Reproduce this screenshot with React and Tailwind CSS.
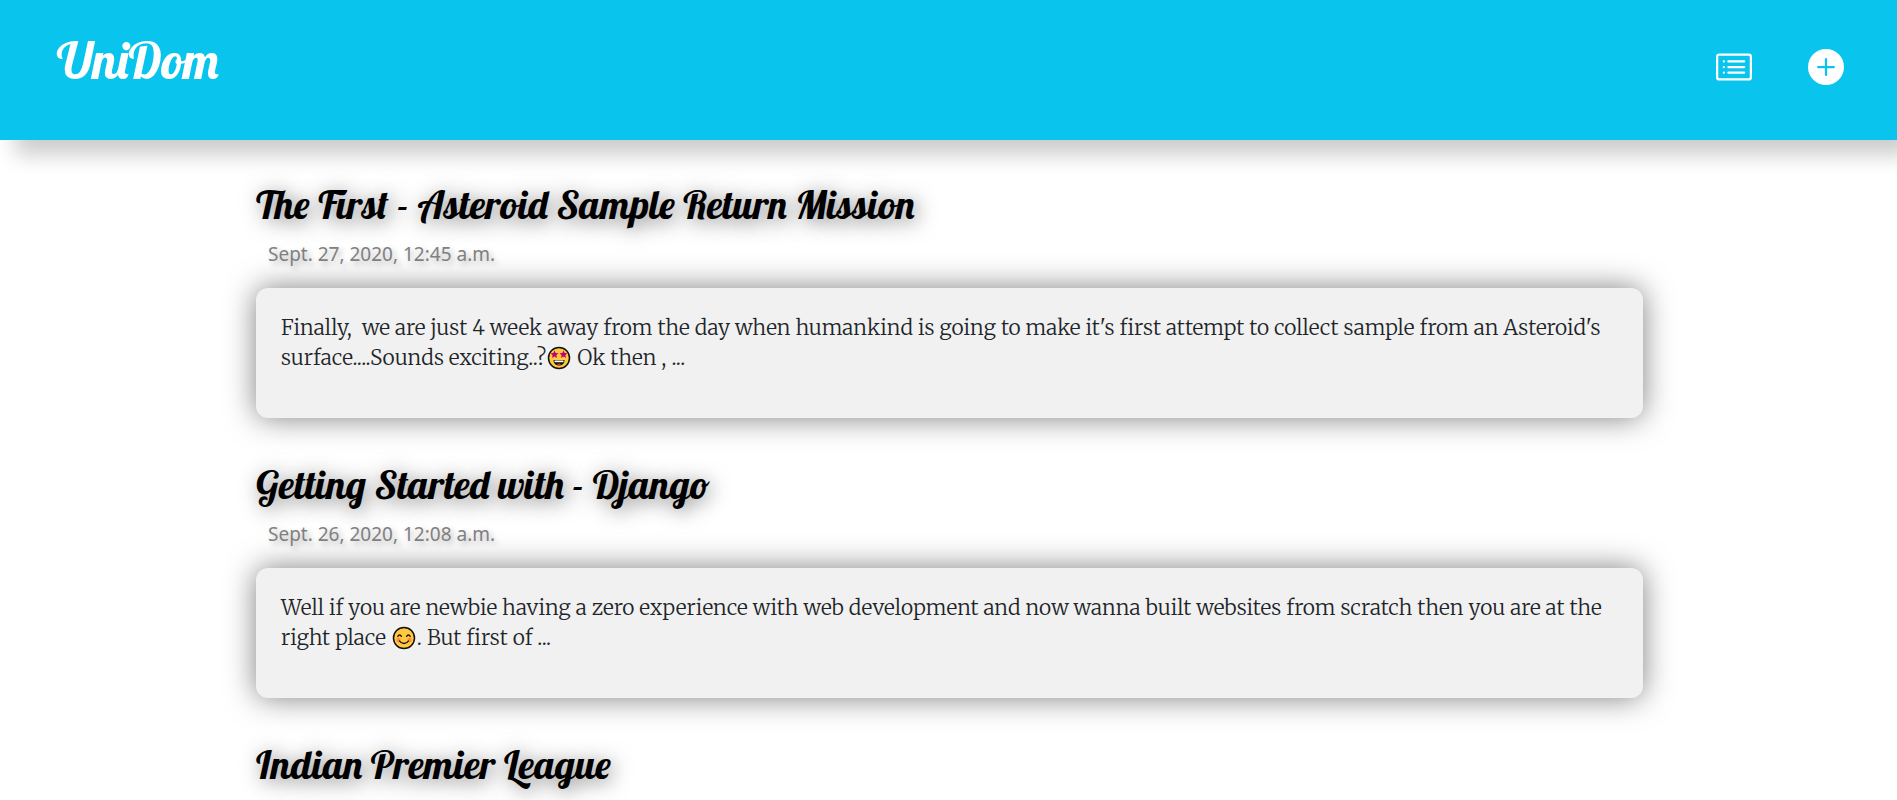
function ListIcon() {
  return (
    <svg viewBox="0 0 16 16" className="size-9" fill="currentColor" aria-hidden="true">
      <path fillRule="evenodd" d="M14.5 3h-13a.5.5 0 0 0-.5.5v9a.5.5 0 0 0 .5.5h13a.5.5 0 0 0 .5-.5v-9a.5.5 0 0 0-.5-.5zm-13-1A1.500 1.500 0 0 0 0 3.500v9A1.500 1.500 0 0 0 1.500 14h13a1.500 1.500 0 0 0 1.500-1.500v-9A1.500 1.500 0 0 0 14.500 2h-13z" />
      <path fillRule="evenodd" d="M5 8a.5.5 0 0 1 .5-.5h7a.5.5 0 0 1 0 1h-7A.5.5 0 0 1 5 8zm0-2.500a.5.5 0 0 1 .5-.5h7a.5.5 0 0 1 0 1h-7a.5.5 0 0 1-.5-.5zm0 5a.5.5 0 0 1 .5-.5h7a.5.5 0 0 1 0 1h-7a.5.5 0 0 1-.5-.5z" />
      <circle cx="3.5" cy="5.500" r=".5" />
      <circle cx="3.5" cy="8" r=".5" />
      <circle cx="3.5" cy="10.500" r=".5" />
    </svg>
  );
}

function PlusIcon() {
  return (
    <svg viewBox="0 0 16 16" className="size-9" aria-hidden="true">
      <circle cx="8" cy="8" r="8" fill="currentColor" />
      <path d="M8 4.500v7M4.500 8h7" stroke="#09c5ed" strokeWidth="1" strokeLinecap="round" />
    </svg>
  );
}

function StarStruck() {
  return (
    <svg viewBox="0 0 24 24" className="mx-px inline-block size-6 align-[-5px]" role="img" aria-label="star-struck">
      <circle cx="12" cy="12" r="10.500" fill="#ffc83d" stroke="#111" strokeWidth="1.500" />
      <path d="M7.500 4.500l1.200 2.500 2.800.3-2.100 1.900.6 2.800-2.500-1.400L5 12l.6-2.800-2.100-1.900 2.800-.3z" fill="#bf0077" />
      <path d="M16.500 4.500l1.200 2.500 2.800.3-2.100 1.900.6 2.800-2.500-1.400L14 12l.6-2.800-2.100-1.900 2.800-.3z" fill="#bf0077" />
      <path d="M6.500 14h11c0 3.600-2.200 5.500-5.500 5.500S6.500 17.600 6.500 14z" fill="#111" />
      <path d="M7.500 14.500h9v1.700h-9z" fill="#fff" />
      <path d="M9.500 18.300c1.500-1.100 3.500-1.100 5 0-1.500.8-3.500.8-5 0z" fill="#f03a17" />
    </svg>
  );
}

function Smiling() {
  return (
    <svg viewBox="0 0 24 24" className="mx-px inline-block size-6 align-[-5px]" role="img" aria-label="smiling">
      <circle cx="12" cy="12" r="10.500" fill="#ffc83d" stroke="#111" strokeWidth="1.500" />
      <circle cx="6.500" cy="14" r="2.200" fill="#ff8a4a" />
      <circle cx="17.500" cy="14" r="2.200" fill="#ff8a4a" />
      <path d="M5.800 10.500c.8-2 2.800-2 3.600 0M14.600 10.500c.8-2 2.800-2 3.600 0M7.500 15c2 3.300 7 3.300 9 0" fill="none" stroke="#111" strokeWidth="1.300" strokeLinecap="round" />
    </svg>
  );
}

const posts = [
  {
    title: "The First - Asteroid Sample Return Mission",
    date: "Sept. 27, 2020, 12:45 a.m.",
    body: (
      <>
        Finally,&nbsp; we are just 4 week away from the day when humankind is going to make it's first attempt to
        collect sample from an Asteroid's surface....Sounds exciting..?
        <StarStruck /> Ok then , ...
      </>
    ),
  },
  {
    title: "Getting Started with - Django",
    date: "Sept. 26, 2020, 12:08 a.m.",
    body: (
      <>
        Well if you are newbie having a zero experience with web development and now wanna built websites from
        scratch then you are at the right place <Smiling />. But first of ...
      </>
    ),
  },
  { title: "Indian Premier League" },
];

function Post({ title, date, body }) {
  return (
    <article>
      <h2 className="font-['Lobster','Liberation_Serif',serif] text-[40px] leading-12 font-normal text-black [text-shadow:3px_3px_20px_rgba(0,0,0,0.5)]">
        <a href="#post">{title}</a>
      </h2>
      {date && (
        <p className="mt-3 pl-3 font-['Segoe_UI','Noto_Sans',sans-serif] text-[19px] leading-7 text-[#808080] [text-shadow:3px_3px_6px_rgba(0,0,0,0.3)]">
          {date}
        </p>
      )}
      {body && (
        <div className="mt-5 mb-[42px] min-h-[130px] rounded-xl bg-[#f1f1f1] px-[25px] pt-[25px] pb-[45px] shadow-[0_0_30px_rgba(0,0,0,0.5)]">
          <p className="font-['Merriweather','Liberation_Serif',serif] text-[21px] leading-[30px] font-light text-[#212529]">
            {body}
          </p>
        </div>
      )}
    </article>
  );
}

export default function App() {
  return (
    <div className="bg-white">
      <header className="flex h-[140px] items-start justify-between bg-[#09c5ed] pr-[53px] pl-[57px] text-white shadow-[15px_15px_20px_rgba(0,0,0,0.2)]">
        <a href="#home" className="pt-[29px] font-['Lobster','Liberation_Serif',serif] text-[50px] leading-[64px]">
          UniDom
        </a>
        <nav className="flex gap-14 pt-[49px]">
          <a href="#list" aria-label="All posts"><ListIcon /></a>
          <a href="#new" aria-label="New post"><PlusIcon /></a>
        </nav>
      </header>
      <main className="pt-10 pr-[254px] pb-3 pl-64">
        {posts.map((post) => (
          <Post key={post.title} {...post} />
        ))}
      </main>
    </div>
  );
}
